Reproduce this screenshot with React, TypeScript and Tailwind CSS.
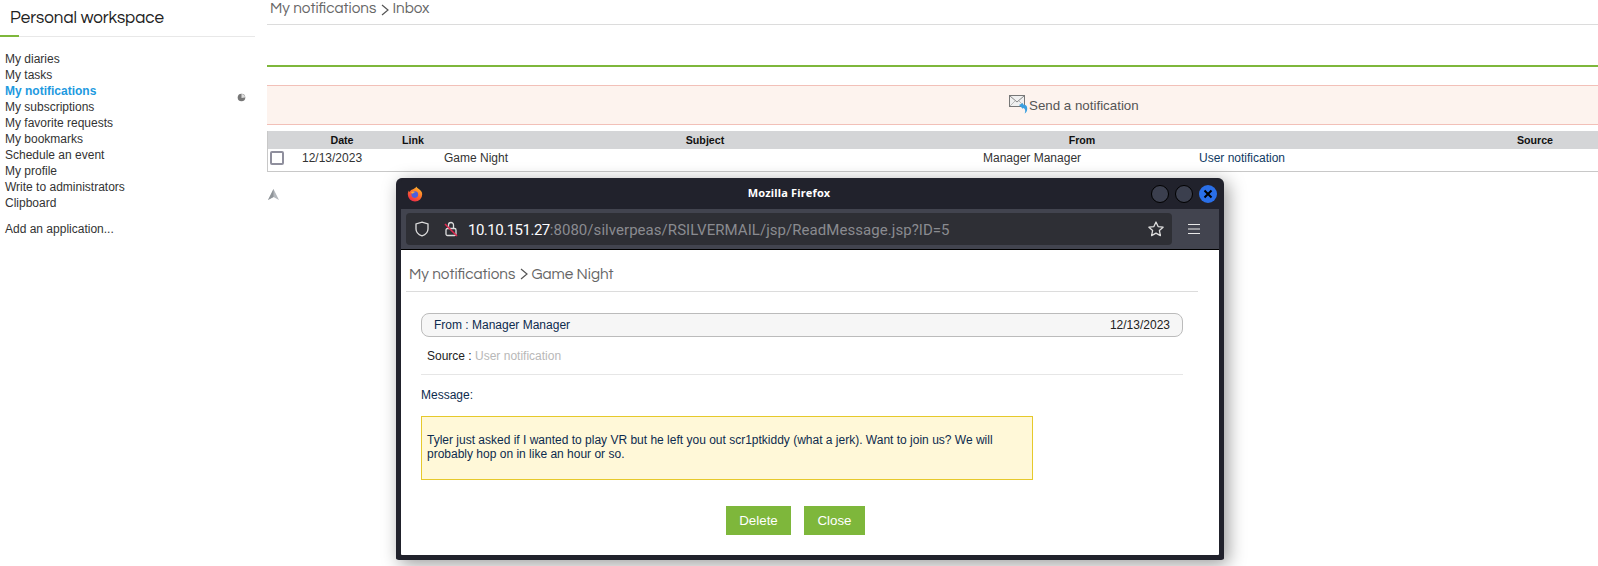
import React from "react";

const sans = "font-['Liberation_Sans',Arial,sans-serif]";
const headingFont = "font-['Questrial','Lato','Liberation_Sans',sans-serif]";

const menu = ["My diaries", "My tasks", "My notifications", "My subscriptions", "My favorite requests", "My bookmarks", "Schedule an event", "My profile", "Write to administrators", "Clipboard"];

function Sidebar() {
  return (
    <aside className="w-[255px] shrink-0">
      <div className={`h-[36px] pl-[10px] pt-[7px] text-[17px] leading-[23px] text-[#222] ${headingFont}`}>Personal workspace</div>
      <div className="h-[1px] bg-[#e8e8e8] relative">
        <div className="absolute left-0 top-[-1px] h-[2px] w-[19px] bg-[#7eb73b]" />
      </div>
      <nav className="pt-[14px] pl-[5px] text-[12px] leading-[16px] text-[#333]">
        {menu.map((m) => (
          <div key={m} className={m === "My notifications" ? "font-bold text-[#1e9ae0]" : ""}>{m}</div>
        ))}
        <div className="mt-[10px]">Add an application...</div>
      </nav>
    </aside>
  );
}

function MailIcon() {
  return (
    <svg width="22" height="22" viewBox="0 0 22 22" className="shrink-0">
      <rect x="0.5" y="1.5" width="15" height="11" fill="#f0f0f0" stroke="#777" />
      <path d="M1 2l7 6 7-6" fill="none" stroke="#888" />
      <path d="M1 12l5-5M15 12l-5-5" fill="none" stroke="#bbb" />
      <path d="M10 11l4-2v1.500c3 0 5 2 4 6-.4 1.400-1.200 2.400-2.400 3 1-1.800 1-5-1.600-5.500V15z" fill="#3a9fe0" />
    </svg>
  );
}

const cols = "grid grid-cols-[31px_86px_56px_528px_226px_276px_128px]";

function Main() {
  return (
    <main className="flex-1 min-w-0">
      <div className={`h-[25px] border-b border-[#dcdcdc] text-[15.3px] leading-[16px] text-[#666] ${headingFont} flex items-start pl-[3px] gap-[5px]`}>
        <span>My notifications</span><Chevron /><span className="ml-[-2px]">Inbox</span>
      </div>
      <div className="h-[42px] border-b-2 border-[#7eb73b]" />
      <div className={`mt-[18px] h-[40px] border-y border-[#f2c0b8] bg-[#fdf3ee] flex items-center pl-[742px] text-[13.33px] text-[#555] ${sans}`}>
        <MailIcon /><span className="ml-[-2px] mt-[1px]">Send a notification</span>
      </div>
      <div className="mt-[6px] border border-t-0 border-r-0 border-[#c8c8c8] border-b-[1px]">
        <div className={`${cols} h-[18px] bg-[#d4d5d7] text-[10.67px] leading-[18px] font-bold text-[#111] text-center`}>
          <div /><div>Date</div><div>Link</div><div>Subject</div><div>From</div><div /><div>Source</div>
        </div>
        <div className={`${cols} h-[22px] text-[12px] leading-[18px] text-[#333] items-start`}>
          <div className="pl-[2px] pt-[2px]"><div className="h-[14px] w-[14px] rounded-[2px] border-2 border-[#8f8f9d] bg-white" /></div>
          <div className="pl-[3px]">12/13/2023</div>
          <div />
          <div className="pl-[3px]">Game Night</div>
          <div className="pl-[14px]">Manager Manager</div>
          <div className="pl-[4px] text-[#0f3a63]">User notification</div>
          <div />
        </div>
      </div>
      <svg width="13" height="12" viewBox="0 0 13 12" className="mt-[17px]">
        <path d="M6.500 0L12 11 6.500 8 1 11z" fill="#b4b8bd" />
        <path d="M6.500 0L1 11 6.500 8z" fill="#8f9499" />
      </svg>
    </main>
  );
}

function Chevron() {
  return (
    <svg width="8" height="12" viewBox="0 0 8 12" className="shrink-0 mt-[4px]">
      <path d="M1 1l6 5-6 5" fill="none" stroke="#555" strokeWidth="1.200" />
    </svg>
  );
}

function FirefoxLogo() {
  return (
    <svg width="16" height="16" viewBox="0 0 16 16">
      <defs>
        <linearGradient id="ff" x1="0.8" y1="0" x2="0.2" y2="1">
          <stop offset="0" stopColor="#ffc22e" />
          <stop offset="0.5" stopColor="#ff6a2a" />
          <stop offset="1" stopColor="#e8224e" />
        </linearGradient>
      </defs>
      <path d="M8 15.500A7.200 7.200 0 0 1 .8 8.300C.8 6.800 1.300 5.400 2 4.400c0 .8.300 1.300.7 1.600C3.200 4.500 4.400 3.700 5.400 3.400 6.800 2.900 8.800 2 9.500.5c.2 1.200 1 1.500 2 2.300 2.300 1.500 3.700 3.100 3.700 5.500A7.200 7.200 0 0 1 8 15.500z" fill="url(#ff)" />
      <circle cx="7.800" cy="8.600" r="3.300" fill="#4a5fe0" />
      <path d="M4 6.200c1.500-.8 3.200-.8 4.700.1-1.100 0-2.200.5-2.700 1.200-.8.200-1.500-.4-2-1.300z" fill="#ffb02e" />
    </svg>
  );
}

function BrowserWindow() {
  return (
    <div className={`absolute left-[396px] top-[178px] w-[828px] h-[382px] rounded-t-[6px] rounded-b-[3px] bg-[#21222c] border-x-[5px] border-b-[5px] border-[#21222c] shadow-[4px_4px_18px_rgba(0,0,0,0.4)] flex flex-col ${sans}`}>
      <div className="h-[31px] shrink-0 flex items-center relative">
        <div className="ml-[6px]"><FirefoxLogo /></div>
        <div className="absolute left-0 right-0 text-center text-[11px] font-bold text-white font-['Noto_Sans',sans-serif] tracking-[0.2px] -translate-x-[21px]">Mozilla Firefox</div>
        <div className="ml-auto flex gap-[6px] mr-[2px]">
          <div className="h-[18px] w-[18px] rounded-full bg-[#3b3f4e] border border-black" />
          <div className="h-[18px] w-[18px] rounded-full bg-[#3b3f4e] border border-black" />
          <div className="h-[18px] w-[18px] rounded-full bg-[#2a6fe8] flex items-center justify-center">
            <svg width="10" height="10" viewBox="0 0 10 10"><path d="M1.500 1.500l7 7M8.500 1.500l-7 7" stroke="#000" strokeWidth="2" /></svg>
          </div>
        </div>
      </div>
      <div className="h-[41px] shrink-0 bg-[#42444f] border-b border-black flex items-center pl-[5px] pr-0">
        <div className="w-[766px] h-[32px] rounded-[4px] bg-[#2e2f35] flex items-center text-[#fbfbfe]">
          <svg width="16" height="16" viewBox="0 0 16 16" className="ml-[8px]">
            <path d="M8 1.200l6 1.800v5c0 3.400-2.600 5.700-6 6.900-3.400-1.200-6-3.500-6-6.900V3z" fill="none" stroke="#ddd" strokeWidth="1.300" />
          </svg>
          <svg width="16" height="16" viewBox="0 0 16 16" className="ml-[13px]">
            <path d="M5.500 7V4a2.500 2.500 0 0 1 5 0V7" fill="none" stroke="#ddd" strokeWidth="1.300" />
            <rect x="3" y="7.500" width="10" height="7" rx="1.500" fill="none" stroke="#ddd" strokeWidth="1.300" />
            <path d="M2 3l12 12" stroke="#e22850" strokeWidth="1.500" />
          </svg>
          <span className="ml-[9px] mt-[2px] text-[15px] font-['Roboto',sans-serif] whitespace-nowrap">
            <span className="tracking-[-0.5px]">10.10.151.27</span><span className="text-[#8a8b90] tracking-[0.05px]">:8080/silverpeas/RSILVERMAIL/jsp/ReadMessage.jsp?ID=5</span>
          </span>
          <svg width="18" height="18" viewBox="0 0 18 18" className="ml-auto mr-[7px]">
            <path d="M9 2l2.100 4.600 5 .6-3.700 3.400 1 5L9 13.100 4.600 15.600l1-5L1.900 7.200l5-.6z" fill="none" stroke="#ddd" strokeWidth="1.300" strokeLinejoin="round" />
          </svg>
        </div>
        <svg width="14" height="12" viewBox="0 0 14 12" className="ml-[15px]">
          <path d="M1 1.500h12M1 6h12M1 10.500h12" stroke="#e8e8e8" strokeWidth="1.200" />
        </svg>
      </div>
      <div className="flex-1 bg-white rounded-b-[1px] text-[12px]">
        <div className="ml-[5px] mr-[21px] h-[42px] border-b border-[#dcdcdc] flex items-start pt-[14px] pl-[3px] gap-[5px] text-[#666]">
          <span className={`text-[15.3px] leading-[20px] ${headingFont}`}>My notifications</span>
          <Chevron />
          <span className={`ml-[-2px] text-[15.3px] leading-[20px] ${headingFont}`}>Game Night</span>
        </div>
        <div className="ml-[20px] w-[762px]">
          <div className="mt-[21px] h-[24px] rounded-[8px] border border-[#bbb] bg-[#f6f6f6] flex items-center justify-between pl-[12px] pr-[12px] text-[#0d2b4e]">
            <span>From : Manager Manager</span>
            <span className="text-[#222]">12/13/2023</span>
          </div>
          <div className="h-[38px] border-b border-[#e6e6e6] pl-[6px] pt-[11px] leading-[16px] text-[#222]">
            Source : <span className="text-[#b8b8b8]">User notification</span>
          </div>
          <div className="mt-[12px] leading-[16px] text-[#0d2b4e]">Message:</div>
          <div className="mt-[13px] w-[612px] h-[64px] border border-[#e6c92b] bg-[#fff8d8] pl-[5px] pr-[30px] pt-[16px] leading-[14px] text-[#0d2b4e]">
            Tyler just asked if I wanted to play VR but he left you out scr1ptkiddy (what a jerk). Want to join us? We will probably hop on in like an hour or so.
          </div>
        </div>
        <div className="mt-[26px] ml-[325px] flex gap-[13px] text-[13.33px] text-white">
          <div className="w-[65px] h-[29px] bg-[#7eb73b] flex items-center justify-center">Delete</div>
          <div className="w-[61px] h-[29px] bg-[#7eb73b] flex items-center justify-center">Close</div>
        </div>
      </div>
    </div>
  );
}

export default function App() {
  return (
    <div className={`relative w-[1598px] h-[566px] overflow-hidden bg-white flex ${sans}`}>
      <Sidebar />
      <div className="w-[12px] shrink-0 relative">
        <svg width="9" height="9" viewBox="0 0 9 9" className="absolute left-[-18px] top-[93px]">
          <circle cx="4.500" cy="4.500" r="3.800" fill="#777" />
          <path d="M4.500 1a3.500 3.500 0 0 1 3.500 3.500L4.500 5z" fill="#ddd" />
        </svg>
      </div>
      <Main />
      <BrowserWindow />
    </div>
  );
}
